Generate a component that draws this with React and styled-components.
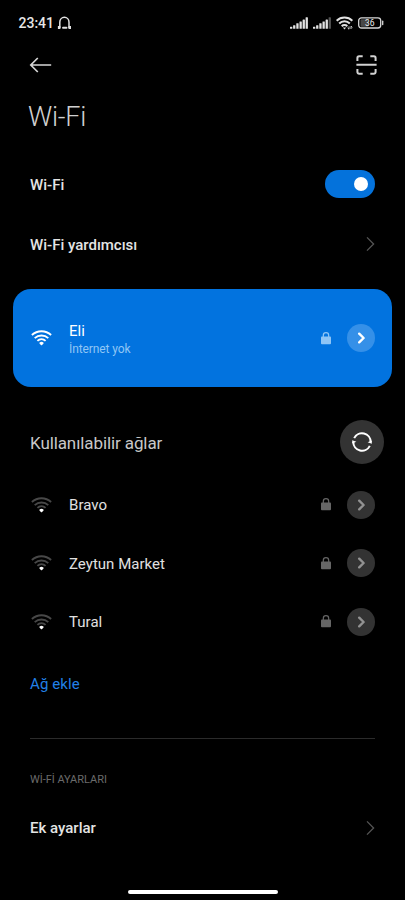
import React from "react";
import styled, { createGlobalStyle } from "styled-components";

const GlobalStyle = createGlobalStyle`
  * { box-sizing: border-box; }
  html, body { margin: 0; background: #000; }
  body { font-family: Roboto, sans-serif; color: #e4e4e4; }
  svg { display: block; flex: none; }
  button { border: 0; padding: 0; background: none; font: inherit; color: inherit; }
`;

const Screen = styled.main`
  width: 405px;
  height: 900px;
  background: #000;
  display: flex;
  flex-direction: column;
  overflow: hidden;
`;

const StatusBar = styled.header`
  height: 46px;
  padding: 0 21px 0 18px;
  display: flex;
  align-items: center;
  justify-content: space-between;
  flex: none;
`;

const StatusGroup = styled.div`
  display: flex;
  align-items: center;
  gap: ${(p) => p.$gap}px;
`;

const Clock = styled.span`
  font-size: 14px;
  line-height: 18px;
  font-weight: 500;
  padding-left: 0.5px;
  color: #e6e6e6;
`;

const Toolbar = styled.nav`
  height: 38px;
  padding: 0 28px 0 29px;
  display: flex;
  align-items: center;
  justify-content: space-between;
  flex: none;
`;

const Title = styled.h1`
  margin: 0;
  height: 70px;
  padding: 0 28px;
  flex: none;
  font-size: 27px;
  line-height: 66px;
  font-weight: 300;
  letter-spacing: -0.25px;
  color: #d0d0d0;
`;

const SettingRow = styled.div`
  height: 60px;
  padding: 0 30px;
  display: flex;
  align-items: center;
  justify-content: space-between;
  flex: none;
`;

const SettingLabel = styled.span`
  font-size: 15px;
  line-height: 20px;
  font-weight: 500;
  padding-top: ${(p) => (p.$lowered ? 2 : 0)}px;
  color: #e4e4e4;
`;

const Toggle = styled.button`
  width: 50.5px;
  height: 28px;
  border-radius: 14px;
  padding: 0 7px;
  background: #0472db;
  display: flex;
  align-items: center;
  justify-content: flex-end;
`;

const ToggleKnob = styled.span`
  width: 14px;
  height: 14px;
  border-radius: 50%;
  background: #fff;
`;

const ConnectedCard = styled.section`
  height: 98px;
  margin: 15px 13px 0;
  padding: 0 17px 0 18px;
  border-radius: 18px;
  background: #0273df;
  display: flex;
  align-items: center;
  flex: none;
`;

const SectionHeader = styled.div`
  height: 44px;
  margin: 33px 21px 11px 30px;
  display: flex;
  align-items: center;
  justify-content: space-between;
  flex: none;
`;

const SectionTitle = styled.h2`
  margin: 0;
  padding-top: 2px;
  font-size: 17px;
  line-height: 22px;
  font-weight: 400;
  letter-spacing: -0.1px;
  color: #c8c8c8;
`;

const RefreshButton = styled.button`
  width: 44px;
  height: 44px;
  border-radius: 50%;
  background: #333;
  display: flex;
  align-items: center;
  justify-content: center;
`;

const NetworkList = styled.div`
  display: flex;
  flex-direction: column;
  flex: none;
  padding-top: 0.5px;
`;

const NetworkRow = styled.div`
  height: 58.5px;
  padding: 0 30px 0 31px;
  display: flex;
  align-items: center;
  flex: none;
`;

const NetworkText = styled.div`
  flex: 1;
  margin-left: 17px;
  padding-top: 2px;
  display: flex;
  flex-direction: column;
`;

const NetworkName = styled.span`
  font-size: 15px;
  line-height: 19px;
  letter-spacing: 0.03px;
  color: ${(p) => (p.$active ? "#fff" : "#e0e0e0")};
`;

const NetworkStatus = styled.span`
  font-size: 12px;
  line-height: 16px;
  letter-spacing: -0.1px;
  color: #90c6f5;
`;

const DetailButton = styled.button`
  width: 28px;
  height: 28px;
  margin-left: 16px;
  border-radius: 50%;
  background: ${(p) => (p.$active ? "#3590e8" : "#333")};
  color: ${(p) => (p.$active ? "#fff" : "#929292")};
  display: flex;
  align-items: center;
  justify-content: center;
`;

const AddNetwork = styled.button`
  align-self: flex-start;
  height: 65.5px;
  margin-left: 30px;
  font-size: 15px;
  letter-spacing: 0.12px;
  color: #2180e8;
  flex: none;
`;

const Divider = styled.hr`
  width: 345px;
  height: 1px;
  margin: 21px 30px 0;
  border: 0;
  background: #2b2b2b;
  flex: none;
`;

const Caption = styled.h3`
  margin: 32px 30px 10px;
  height: 17px;
  font-size: 11px;
  line-height: 17px;
  font-weight: 400;
  letter-spacing: -0.03px;
  color: #6b6b6b;
  flex: none;
`;

const HomeIndicator = styled.div`
  width: 150px;
  height: 4px;
  margin: auto auto 6px;
  border-radius: 2px;
  background: #fff;
  flex: none;
`;

const HeadsetIcon = () => (
  <svg width="15" height="15" viewBox="0 0 15 15" fill="none" stroke="#e2e2e2">
    <path d="M2.8 12V6.2a4.6 5 0 0 1 9.2 0V12" strokeWidth="1.5" />
    <path d="M.9 11.4h2.5M11.5 11.4h2.5" strokeWidth="3" strokeLinejoin="round" />
    <path d="M6 11.8h3.5" strokeWidth="1.9" strokeLinecap="round" />
  </svg>
);

const SignalIcon = ({ weak }) => (
  <svg width="18" height="12" viewBox="0 0 18 12" fill="#e2e2e2">
    <rect x="0" y="9.7" width="2.3" height="2.1" rx="0.4" />
    <rect x="3.1" y="8.2" width="2.3" height="3.6" rx="0.4" />
    <rect x="6.3" y="6.2" width="2.3" height="5.6" rx="0.4" />
    <rect x="9.5" y="4.4" width="2.3" height="7.4" rx="0.4" />
    <rect x="12.6" y="2.5" width="2.3" height="9.3" rx="0.4" />
    <rect x="15.6" y="0.3" width="2.3" height="11.5" rx="0.4" fill={weak ? "#555" : "#e2e2e2"} />
  </svg>
);

const StatusWifiIcon = () => (
  <svg width="17" height="14" viewBox="0 0 17 14" fill="none" stroke="#e2e2e2" strokeWidth="2">
    <path d="M.6 4.7a11.2 11.2 0 0 1 15.8 0M3.2 7.5a7.4 7.4 0 0 1 10.6 0M5.7 10.2a4 4 0 0 1 5.6 0" />
    <path d="M6.8 11.4h3.4L8.5 13.6z" fill="#e2e2e2" stroke="none" />
    <path d="M13 10.4v2.8l-1.4-1.3M15 13v-2.8l1.4 1.3" strokeWidth="0.9" />
  </svg>
);

const BatteryIcon = () => (
  <svg width="26" height="12" viewBox="0 0 26 12">
    <rect x="2.5" y="2.3" width="8" height="7.4" rx="1.2" fill="#484848" />
    <rect x="0.7" y="0.8" width="22" height="10.2" rx="2.8" fill="none" stroke="#d8d8d8" strokeWidth="1.3" />
    <path d="M24.7 4.2v3.4" stroke="#d8d8d8" strokeWidth="1.3" strokeLinecap="round" />
    <text x="11.8" y="9" textAnchor="middle" fontFamily="Roboto, sans-serif" fontSize="8.5" fontWeight="400" fill="#eee">36</text>
  </svg>
);

const BackIcon = () => (
  <svg width="24" height="18" viewBox="0 0 24 18" fill="none" stroke="#d6d6d6" strokeWidth="1.7">
    <path d="M22.2 9H2M8.8 2L1.8 9l7 7" />
  </svg>
);

const ScanIcon = () => (
  <svg width="21" height="20" viewBox="0 0 21 20" fill="none" stroke="#d2d2d2" strokeWidth="2">
    <path d="M1.4 6V3a1.7 1.7 0 0 1 1.7-1.7h3.6M14.3 1.3h3.6A1.7 1.7 0 0 1 19.6 3v3M19.6 14v3a1.7 1.7 0 0 1-1.7 1.7h-3.6M6.7 18.7H3.1A1.7 1.7 0 0 1 1.4 17v-3M.4 9.8h20.2" />
  </svg>
);

const ArrowIcon = () => (
  <svg width="9" height="16" viewBox="0 0 9 16" fill="none" stroke="#555" strokeWidth="1.3">
    <path d="M1 1.4l6.6 6.6L1 14.6" />
  </svg>
);

const ChevronIcon = () => (
  <svg width="8" height="12" viewBox="0 0 8 12" fill="none" stroke="currentColor" strokeWidth="2.4">
    <path d="M2.2 1.7L6.6 6l-4.4 4.3" strokeLinecap="round" strokeLinejoin="round" />
  </svg>
);

const LockIcon = ({ color }) => (
  <svg width="10" height="13" viewBox="0 0 10 13" fill="none">
    <path d="M2.3 6V3.4a2.7 2.7 0 0 1 5.4 0V6" stroke={color} strokeWidth="1.2" />
    <rect y="4.6" width="10" height="7.6" rx="0.9" fill={color} />
  </svg>
);

const WifiIcon = ({ active }) => (
  <svg width="21" height="16" viewBox="0 0 21 16" fill="none" stroke={active ? "#fff" : "#484848"} strokeWidth="1.9">
    <path d="M.9 5a14.1 14.1 0 0 1 19.2 0M3.7 8.1a10 10 0 0 1 13.6 0M6.4 10.9a6.1 6.1 0 0 1 8.2 0" />
    <path d="M8.6 12.4q1.9-1.1 3.8 0q.5.4.1 1l-1.4 1.5q-.6.5-1.2 0l-1.4-1.5q-.4-.6.1-1z" fill="#fff" stroke="none" />
  </svg>
);

const RefreshIcon = () => (
  <svg width="20" height="20" viewBox="0 0 20 20" fill="none" stroke="#fff" strokeWidth="2">
    <path d="M2.2 6.1A8.7 8.7 0 0 1 18.7 10M17.8 13.9A8.7 8.7 0 0 1 1.3 10" />
    <path d="M15.6 10.2l4.2 1.6V8.6zM4.4 9.8L.2 8.2v3.2z" fill="#fff" stroke="none" />
  </svg>
);

const networks = [
  { name: "Bravo" },
  { name: "Zeytun Market" },
  { name: "Tural" },
];

const NetworkContent = ({ name, status, active }) => (
  <>
    <WifiIcon active={active} />
    <NetworkText>
      <NetworkName $active={active}>{name}</NetworkName>
      {status && <NetworkStatus>{status}</NetworkStatus>}
    </NetworkText>
    <LockIcon color={active ? "#8fc5f6" : "#666"} />
    <DetailButton $active={active} aria-label={name}>
      <ChevronIcon />
    </DetailButton>
  </>
);

export default function App() {
  return (
    <Screen>
      <GlobalStyle />
      <StatusBar>
        <StatusGroup $gap={3}>
          <Clock>23:41</Clock>
          <HeadsetIcon />
        </StatusGroup>
        <StatusGroup $gap={5}>
          <SignalIcon />
          <SignalIcon weak />
          <StatusWifiIcon />
          <BatteryIcon />
        </StatusGroup>
      </StatusBar>
      <Toolbar>
        <BackIcon />
        <ScanIcon />
      </Toolbar>
      <Title>Wi-Fi</Title>
      <SettingRow>
        <SettingLabel $lowered>Wi-Fi</SettingLabel>
        <Toggle role="switch" aria-checked="true" aria-label="Wi-Fi">
          <ToggleKnob />
        </Toggle>
      </SettingRow>
      <SettingRow>
        <SettingLabel $lowered>Wi-Fi yardımcısı</SettingLabel>
        <ArrowIcon />
      </SettingRow>
      <ConnectedCard>
        <NetworkContent name="Eli" status="İnternet yok" active />
      </ConnectedCard>
      <SectionHeader>
        <SectionTitle>Kullanılabilir ağlar</SectionTitle>
        <RefreshButton aria-label="Kullanılabilir ağlar">
          <RefreshIcon />
        </RefreshButton>
      </SectionHeader>
      <NetworkList>
        {networks.map((n) => (
          <NetworkRow key={n.name}>
            <NetworkContent name={n.name} />
          </NetworkRow>
        ))}
      </NetworkList>
      <AddNetwork>Ağ ekle</AddNetwork>
      <Divider />
      <Caption>Wİ-Fİ AYARLARI</Caption>
      <SettingRow>
        <SettingLabel>Ek ayarlar</SettingLabel>
        <ArrowIcon />
      </SettingRow>
      <HomeIndicator />
    </Screen>
  );
}
